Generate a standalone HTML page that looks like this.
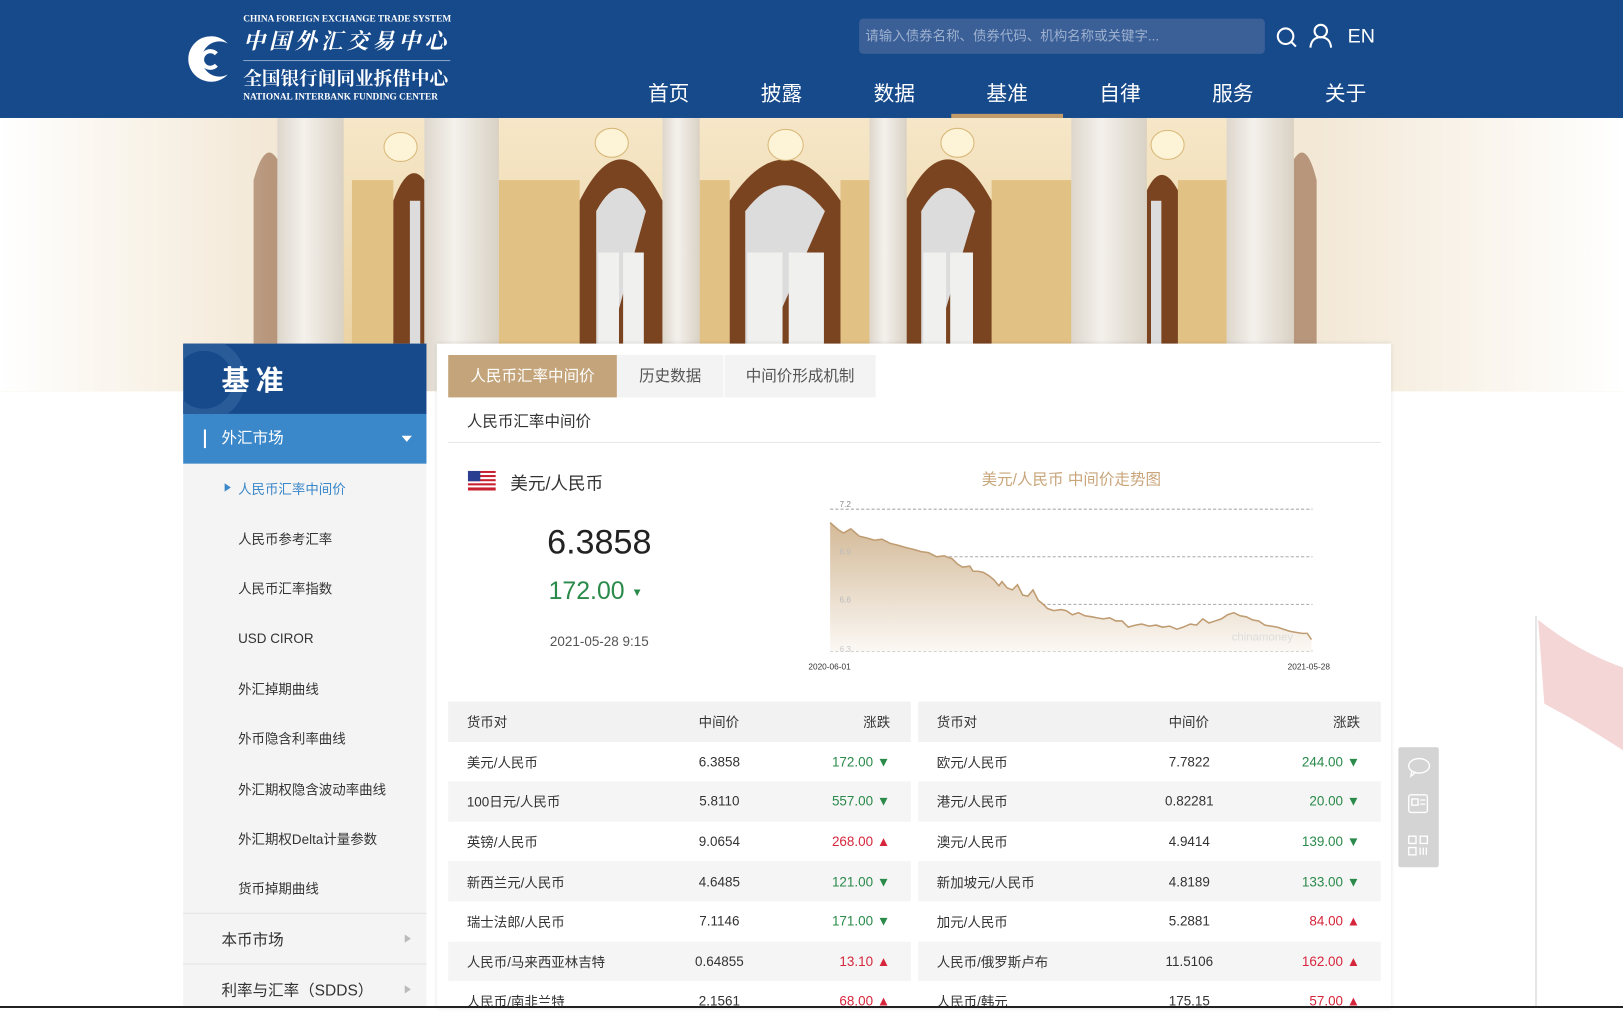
<!DOCTYPE html>
<html><head><meta charset="utf-8">
<style>
*{margin:0;padding:0;box-sizing:border-box}
html,body{width:1623px;height:1008px;overflow:hidden;background:#fff}
#w{position:absolute;left:0;top:0;width:1568px;height:974px;transform:scale(1.03508,1.03491);transform-origin:0 0;font-family:"Liberation Sans","Noto Sans CJK SC",sans-serif;color:#333}
.a{position:absolute}
.hdr{left:0;top:0;width:1568px;height:114px;background:#174a8b}
.nav{top:74px;font-size:20px;color:#fff;width:60px;text-align:center;margin-left:-30px}
.sb{left:177px;width:235px;background:#f4f4f4}
.si{position:absolute;left:230px;font-size:13px;color:#333;transform:translateY(-50%)}
.tbl{font-size:13px}
.g{color:#2a8a4a}.r{color:#d6263c}
.row{position:absolute;height:38.6px;width:447px}
.row span{position:absolute;top:50%;transform:translateY(-50%);white-space:nowrap}
</style></head><body><div id="w">
<!-- banner -->
<svg class="a" style="left:0;top:114px" width="1568" height="264">
<defs>
<linearGradient id="fl"><stop offset="0" stop-color="#fff"/><stop offset="1" stop-color="#fff" stop-opacity="0"/></linearGradient>
<linearGradient id="fr"><stop offset="0" stop-color="#fff" stop-opacity="0"/><stop offset="1" stop-color="#fff"/></linearGradient>
<linearGradient id="col" x1="0" x2="1"><stop offset="0" stop-color="#ddd6cc"/><stop offset=".4" stop-color="#f4f1ec"/><stop offset="1" stop-color="#d9d1c4"/></linearGradient>
<linearGradient id="wall" x1="0" y1="0" x2="0" y2="1"><stop offset="0" stop-color="#f6e7c8"/><stop offset="1" stop-color="#e9cf9e"/></linearGradient>
</defs>
<rect width="1568" height="264" fill="url(#wall)"/>
<rect x="0" width="270" height="264" fill="#f3e8d6"/>
<rect x="1250" width="318" height="264" fill="#f3e8d6"/>
<g fill="#e2c184"><rect x="482" y="60" width="78" height="204"/><rect x="676" y="60" width="29" height="204"/><rect x="812" y="60" width="28" height="204"/><rect x="958" y="60" width="77" height="204"/><rect x="340" y="60" width="40" height="204"/><rect x="1138" y="60" width="47" height="204"/></g>
<g fill="#7b4420">
<path d="M380 264V80Q395 40 410 60V264Z"/>
<path d="M560 264V80Q600 0 640 80V264Z"/>
<path d="M705 264V80Q758 0 812 80V264Z"/>
<path d="M875 264V80Q915 0 958 80V264Z"/>
<path d="M1108 264V70Q1122 40 1138 70V264Z"/>
<path d="M245 264V60Q256 20 268 40V264Z" opacity=".5"/>
<path d="M1250 264V40Q1262 20 1272 60V264Z" opacity=".5"/>
</g>
<g fill="#dcdcdc">
<path d="M576 264V90Q600 45 624 90Z"/>
<path d="M720 264V90Q758 40 797 90Z"/>
<path d="M890 264V90Q915 45 942 90Z"/>
<rect x="396" y="80" width="10" height="184"/><rect x="1112" y="80" width="10" height="184"/>
</g>
<g fill="#f0f0ef"><rect x="578" y="130" width="20" height="120"/><rect x="602" y="130" width="20" height="120"/><rect x="722" y="130" width="34" height="120"/><rect x="762" y="130" width="34" height="120"/><rect x="892" y="130" width="22" height="120"/><rect x="918" y="130" width="22" height="120"/></g>
<g fill="url(#col)">
<rect x="268" y="0" width="64" height="264"/>
<rect x="410" y="0" width="72" height="264"/>
<rect x="640" y="0" width="36" height="264"/>
<rect x="840" y="0" width="36" height="264"/>
<rect x="1035" y="0" width="73" height="264"/>
<rect x="1185" y="0" width="65" height="264"/>
</g>
<g fill="#fdf3d6" stroke="#d8b878"><ellipse cx="387" cy="28" rx="16" ry="14"/><ellipse cx="591" cy="24" rx="16" ry="14"/><ellipse cx="759" cy="26" rx="17" ry="15"/><ellipse cx="925" cy="24" rx="16" ry="14"/><ellipse cx="1128" cy="26" rx="16" ry="14"/></g>
<rect x="0" y="0" width="260" height="264" fill="url(#fl)"/><rect x="1270" y="0" width="298" height="264" fill="url(#fr)"/>
</svg>
<!-- flag right -->
<svg class="a" style="left:1470px;top:585px" width="98" height="389"><line x1="14" y1="10" x2="14" y2="389" stroke="#e6e6e6" stroke-width="2"/><path d="M16 14Q55 45 98 60V140Q60 115 22 95Z" fill="#f4d6d6"/></svg>
<!-- header -->
<div class="a hdr"></div>
<svg class="a" style="left:178px;top:33px" width="48" height="48"><path d="M42 9A22 22 0 1 0 42 39A17 17 0 1 1 42 9Z" fill="#fff"/><path d="M31 19A8 8 0 1 0 31 30" stroke="#fff" stroke-width="4" fill="none"/></svg>
<div class="a" style="left:235px;top:13px;font-family:'Liberation Serif',serif;font-size:9px;color:#fff;font-weight:bold">CHINA FOREIGN EXCHANGE TRADE SYSTEM</div>
<div class="a" style="left:235px;top:24px;font-family:'Noto Serif CJK SC',serif;font-size:21px;color:#fff;letter-spacing:4px;font-style:italic;font-weight:bold">中国外汇交易中心</div>
<div class="a" style="left:235px;top:58px;width:200px;height:1px;background:#8aa5cc"></div>
<div class="a" style="left:235px;top:62px;font-family:'Noto Serif CJK SC',serif;font-size:18px;color:#fff;font-weight:bold">全国银行间同业拆借中心</div>
<div class="a" style="left:235px;top:88px;font-family:'Liberation Serif',serif;font-size:9px;color:#fff;font-weight:bold">NATIONAL INTERBANK FUNDING CENTER</div>
<div class="a" style="left:830px;top:18px;width:392px;height:34px;background:#3b5f97;border-radius:4px;color:#9eb1cf;font-size:13px;line-height:34px;padding-left:6px">请输入债券名称、债券代码、机构名称或关键字...</div>
<svg class="a" style="left:1232px;top:25px" width="24" height="24"><circle cx="10" cy="10" r="7.5" stroke="#fff" stroke-width="2" fill="none"/><line x1="15.5" y1="15.5" x2="20" y2="20" stroke="#fff" stroke-width="2"/></svg>
<svg class="a" style="left:1264px;top:22px" width="24" height="26"><circle cx="12" cy="8" r="6" stroke="#fff" stroke-width="2" fill="none"/><path d="M2 24Q3 14 12 14Q21 14 22 24" stroke="#fff" stroke-width="2" fill="none"/></svg>
<div class="a" style="left:1302px;top:25px;color:#fff;font-size:19px">EN</div>
<div class="a nav" style="left:646px">首页</div>
<div class="a nav" style="left:755px">披露</div>
<div class="a nav" style="left:864px">数据</div>
<div class="a nav" style="left:973px">基准</div>
<div class="a nav" style="left:1082px">自律</div>
<div class="a nav" style="left:1191px">服务</div>
<div class="a nav" style="left:1300px">关于</div>
<div class="a" style="left:919px;top:110px;width:108px;height:4px;background:#c19c6a"></div>
<!-- sidebar -->
<div class="a sb" style="top:332px;height:642px"></div>
<div class="a" style="left:177px;top:332px;width:235px;height:68px;background:#174a8b;overflow:hidden"><div class="a" style="left:-20px;top:-5px;width:80px;height:80px;border-radius:50%;border:12px solid #2a5b99"></div><div class="a" style="left:37px;top:14px;color:#fff;font-size:27px;font-weight:bold;letter-spacing:6px">基准</div></div>
<div class="a" style="left:177px;top:400px;width:235px;height:48px;background:#3a87c9;color:#fff;font-size:15px;line-height:48px"><span class="a" style="left:20px;top:15px;width:2px;height:18px;background:#fff"></span><span class="a" style="left:37px">外汇市场</span><span class="a" style="left:211px;top:21px;border:5px solid transparent;border-top:6px solid #fff;width:0;height:0"></span></div>
<div class="a" style="left:217px;top:467px;border:4px solid transparent;border-left:6px solid #3a87c9"></div>
<div class="si" style="top:472px;color:#3a87c9">人民币汇率中间价</div>
<div class="si" style="top:520px">人民币参考汇率</div>
<div class="si" style="top:568px">人民币汇率指数</div>
<div class="si" style="top:617px">USD CIROR</div>
<div class="si" style="top:665px">外汇掉期曲线</div>
<div class="si" style="top:713px">外币隐含利率曲线</div>
<div class="si" style="top:762px">外汇期权隐含波动率曲线</div>
<div class="si" style="top:810px">外汇期权Delta计量参数</div>
<div class="si" style="top:858px">货币掉期曲线</div>
<div class="a" style="left:177px;top:882px;width:235px;height:1px;background:#e4e4e4"></div>
<div class="a" style="left:214px;top:897px;font-size:15px">本币市场</div>
<div class="a" style="left:391px;top:903px;border:4px solid transparent;border-left:6px solid #bbb"></div>
<div class="a" style="left:177px;top:931px;width:235px;height:1px;background:#e4e4e4"></div>
<div class="a" style="left:214px;top:946px;font-size:15px">利率与汇率（SDDS）</div>
<div class="a" style="left:391px;top:952px;border:4px solid transparent;border-left:6px solid #bbb"></div>
<!-- main panel -->
<div class="a" style="left:422px;top:332px;width:922px;height:642px;background:#fff;box-shadow:0 0 4px rgba(0,0,0,.15)"></div>
<div class="a" style="left:433px;top:343px;width:163px;height:41px;background:#c4a57b;color:#fff;font-size:15px;line-height:41px;text-align:center">人民币汇率中间价</div>
<div class="a" style="left:596px;top:343px;width:103px;height:41px;background:#f3f3f3;color:#555;font-size:15px;line-height:41px;text-align:center">历史数据</div>
<div class="a" style="left:700px;top:343px;width:146px;height:41px;background:#f3f3f3;color:#555;font-size:15px;line-height:41px;text-align:center">中间价形成机制</div>
<div class="a" style="left:451px;top:396px;font-size:15px">人民币汇率中间价</div>
<div class="a" style="left:433px;top:427px;width:901px;height:1px;background:#e6e6e6"></div>
<svg class="a" style="left:452px;top:455px" width="27" height="19"><rect width="27" height="19" fill="#fff"/><g fill="#c8202f"><rect y="0" width="27" height="2"/><rect y="4" width="27" height="2"/><rect y="8" width="27" height="2"/><rect y="12" width="27" height="2"/><rect y="16" width="27" height="3"/></g><rect width="12" height="10" fill="#2a3f8f"/></svg>
<div class="a" style="left:493px;top:453px;font-size:17px">美元/人民币</div>
<div class="a" style="left:479px;top:505px;width:200px;text-align:center;font-size:33px;color:#222">6.3858</div>
<div class="a" style="left:530px;top:558px;font-size:24px;color:#2a8a4a">172.00 <span style="font-size:11px;vertical-align:middle">▼</span></div>
<div class="a" style="left:479px;top:612px;width:200px;text-align:center;font-size:13px;color:#555">2021-05-28 9:15</div>
<div class="a" style="left:835px;top:452px;width:400px;text-align:center;font-size:15px;color:#c8a57a">美元/人民币 中间价走势图</div>
<svg class="a" style="left:775px;top:480px" width="530" height="175" viewBox="775 480 530 175">
<defs><linearGradient id="ar" x1="0" y1="0" x2="0" y2="1"><stop offset="0" stop-color="#d3b997"/><stop offset="1" stop-color="#fbf8f4"/></linearGradient></defs>
<g stroke="#aaa" stroke-dasharray="3,2" stroke-width="1"><line x1="802" y1="492" x2="1268" y2="492"/><line x1="802" y1="538" x2="1268" y2="538"/><line x1="802" y1="584" x2="1268" y2="584"/><line x1="802" y1="629" x2="1268" y2="629"/></g>
<path d="M802 505L810 512L815 515L822 511L830 518L838 520L845 522L852 521L860 525L868 527L875 529L883 531L890 533L897 534L905 538L912 537L920 540L925 545L930 548L937 547L940 552L945 552L950 553L955 556L960 560L965 566L968 562L973 568L978 570L983 565L988 575L993 576L998 570L1003 580L1008 584L1012 588L1018 590L1025 589L1030 590L1036 594L1042 592L1048 595L1055 596L1060 597L1066 598L1072 597L1078 600L1084 600L1090 606L1097 604L1103 603L1110 605L1117 604L1123 606L1130 605L1137 608L1143 606L1150 603L1156 604L1162 598L1168 602L1174 600L1180 598L1186 594L1192 592L1198 595L1204 596L1210 599L1216 600L1222 604L1228 605L1234 606L1240 608L1246 610L1252 611L1258 612L1263 612L1267 618L1267 629L802 629Z" fill="url(#ar)"/>
<path d="M802 505L810 512L815 515L822 511L830 518L838 520L845 522L852 521L860 525L868 527L875 529L883 531L890 533L897 534L905 538L912 537L920 540L925 545L930 548L937 547L940 552L945 552L950 553L955 556L960 560L965 566L968 562L973 568L978 570L983 565L988 575L993 576L998 570L1003 580L1008 584L1012 588L1018 590L1025 589L1030 590L1036 594L1042 592L1048 595L1055 596L1060 597L1066 598L1072 597L1078 600L1084 600L1090 606L1097 604L1103 603L1110 605L1117 604L1123 606L1130 605L1137 608L1143 606L1150 603L1156 604L1162 598L1168 602L1174 600L1180 598L1186 594L1192 592L1198 595L1204 596L1210 599L1216 600L1222 604L1228 605L1234 606L1240 608L1246 610L1252 611L1258 612L1263 612L1267 618" fill="none" stroke="#bf9c72" stroke-width="1.5"/>
<g font-size="8" fill="#888" font-family="Liberation Sans,sans-serif"><text x="811" y="490">7.2</text><text x="811" y="536" fill="#bbb">6.9</text><text x="811" y="582" fill="#bbb">6.6</text><text x="811" y="630" fill="#ccc">6.3</text><text x="781" y="647" fill="#333">2020-06-01</text><text x="1244" y="647" fill="#333">2021-05-28</text><text x="1190" y="619" font-size="11" fill="#ddd">chinamoney</text></g>
</svg>
<!-- tables -->
<div class="a tbl" style="left:0;top:0">
<div class="row" style="left:433px;top:678px;background:#f2f2f2"><span style="left:18px">货币对</span><span style="left:242px">中间价</span><span style="right:20px">涨跌</span></div>
<div class="row" style="left:887px;top:678px;background:#f2f2f2"><span style="left:18px">货币对</span><span style="left:242px">中间价</span><span style="right:20px">涨跌</span></div>
<div class="row" style="left:433px;top:716.6px"><span style="left:18px">美元/人民币</span><span style="left:262px;transform:translate(-50%,-50%)">6.3858</span><span class="g" style="right:20px">172.00 ▼</span></div>
<div class="row" style="left:887px;top:716.6px"><span style="left:18px">欧元/人民币</span><span style="left:262px;transform:translate(-50%,-50%)">7.7822</span><span class="g" style="right:20px">244.00 ▼</span></div>
<div class="row" style="left:433px;top:755.2px;background:#f5f5f5"><span style="left:18px">100日元/人民币</span><span style="left:262px;transform:translate(-50%,-50%)">5.8110</span><span class="g" style="right:20px">557.00 ▼</span></div>
<div class="row" style="left:887px;top:755.2px;background:#f5f5f5"><span style="left:18px">港元/人民币</span><span style="left:262px;transform:translate(-50%,-50%)">0.82281</span><span class="g" style="right:20px">20.00 ▼</span></div>
<div class="row" style="left:433px;top:793.8px"><span style="left:18px">英镑/人民币</span><span style="left:262px;transform:translate(-50%,-50%)">9.0654</span><span class="r" style="right:20px">268.00 ▲</span></div>
<div class="row" style="left:887px;top:793.8px"><span style="left:18px">澳元/人民币</span><span style="left:262px;transform:translate(-50%,-50%)">4.9414</span><span class="g" style="right:20px">139.00 ▼</span></div>
<div class="row" style="left:433px;top:832.4px;background:#f5f5f5"><span style="left:18px">新西兰元/人民币</span><span style="left:262px;transform:translate(-50%,-50%)">4.6485</span><span class="g" style="right:20px">121.00 ▼</span></div>
<div class="row" style="left:887px;top:832.4px;background:#f5f5f5"><span style="left:18px">新加坡元/人民币</span><span style="left:262px;transform:translate(-50%,-50%)">4.8189</span><span class="g" style="right:20px">133.00 ▼</span></div>
<div class="row" style="left:433px;top:871px"><span style="left:18px">瑞士法郎/人民币</span><span style="left:262px;transform:translate(-50%,-50%)">7.1146</span><span class="g" style="right:20px">171.00 ▼</span></div>
<div class="row" style="left:887px;top:871px"><span style="left:18px">加元/人民币</span><span style="left:262px;transform:translate(-50%,-50%)">5.2881</span><span class="r" style="right:20px">84.00 ▲</span></div>
<div class="row" style="left:433px;top:909.6px;background:#f5f5f5"><span style="left:18px">人民币/马来西亚林吉特</span><span style="left:262px;transform:translate(-50%,-50%)">0.64855</span><span class="r" style="right:20px">13.10 ▲</span></div>
<div class="row" style="left:887px;top:909.6px;background:#f5f5f5"><span style="left:18px">人民币/俄罗斯卢布</span><span style="left:262px;transform:translate(-50%,-50%)">11.5106</span><span class="r" style="right:20px">162.00 ▲</span></div>
<div class="row" style="left:433px;top:948.2px"><span style="left:18px">人民币/南非兰特</span><span style="left:262px;transform:translate(-50%,-50%)">2.1561</span><span class="r" style="right:20px">68.00 ▲</span></div>
<div class="row" style="left:887px;top:948.2px"><span style="left:18px">人民币/韩元</span><span style="left:262px;transform:translate(-50%,-50%)">175.15</span><span class="r" style="right:20px">57.00 ▲</span></div>
</div>
<!-- float toolbar -->
<div class="a" style="left:1351px;top:722px;width:39px;height:116px;background:#d4d4d4;border-radius:2px"></div>
<svg class="a" style="left:1351px;top:722px" width="39" height="116"><g stroke="#fff" stroke-width="1.3" fill="none"><ellipse cx="20" cy="18" rx="10" ry="7"/><path d="M13 23L12 28L17 24"/><rect x="10" y="46" width="18" height="17" rx="2"/><rect x="13" y="50" width="6" height="6"/><line x1="21" y1="51" x2="26" y2="51"/><line x1="21" y1="55" x2="26" y2="55"/><rect x="10" y="86" width="7" height="7"/><rect x="21" y="86" width="7" height="7"/><rect x="10" y="97" width="7" height="7"/><line x1="21" y1="97" x2="21" y2="104"/><line x1="24" y1="97" x2="24" y2="104"/><line x1="27" y1="97" x2="27" y2="104"/></g></svg>
</div>
<div class="a" style="left:0;top:1006px;width:1623px;height:2px;background:#222"></div>
</body></html>
